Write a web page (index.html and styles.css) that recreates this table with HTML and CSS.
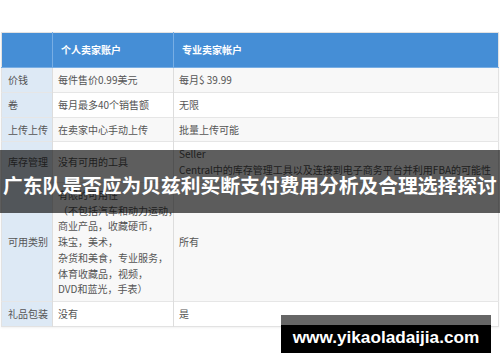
FILE: index.html
```html
<!DOCTYPE html>
<html lang="zh-CN">
<head>
<meta charset="utf-8">
<title>个人卖家账户与专业卖家帐户</title>
<link rel="stylesheet" href="styles.css">
</head>
<body>
<div class="page">
  <table class="compare">
    <colgroup>
      <col class="c1">
      <col class="c2">
      <col class="c3">
    </colgroup>
    <thead>
      <tr>
        <th></th>
        <th>个人卖家账户</th>
        <th>专业卖家帐户</th>
      </tr>
    </thead>
    <tbody>
      <tr class="odd">
        <td class="label">价钱</td>
        <td>每件售价0.99美元</td>
        <td>每月$ 39.99</td>
      </tr>
      <tr>
        <td class="label">卷</td>
        <td>每月最多40个销售额</td>
        <td>无限</td>
      </tr>
      <tr class="odd">
        <td class="label">上传上传</td>
        <td>在卖家中心手动上传</td>
        <td>批量上传可能</td>
      </tr>
      <tr>
        <td class="label">库存管理</td>
        <td>没有可用的工具</td>
        <td class="nowrap">Seller<br>Central中的库存管理工具以及连接到电子商务平台并利用FBA的可能性</td>
      </tr>
      <tr class="odd">
        <td class="label">可用类别</td>
        <td class="nowrap">有限的可用性<br>（不包括汽车和动力运动，<br>商业产品，收藏硬币，<br>珠宝，美术，<br>杂货和美食，专业服务，<br>体育收藏品，视频，<br>DVD和蓝光，手表）</td>
        <td>所有</td>
      </tr>
      <tr>
        <td class="label">礼品包装</td>
        <td>没有</td>
        <td>是</td>
      </tr>
    </tbody>
  </table>

  <div class="banner">
    <h1 class="banner-title">广东队是否应为贝兹利买断支付费用分析及合理选择探讨</h1>
  </div>

  <div class="watermark">www.yikaoladaijia.com</div>
</div>
</body>
</html>
```

FILE: styles.css
```css
html, body {
  margin: 0;
  padding: 0;
  background: #ffffff;
}

.page {
  position: relative;
  width: 500px;
  height: 362px;
  overflow: hidden;
  padding: 32px 2px 0 1px;
  box-sizing: border-box;
  font-family: "Noto Sans CJK SC", "Noto Sans", sans-serif;
}

.compare {
  width: 497px;
  table-layout: fixed;
  border-collapse: collapse;
  border: 1px solid #e2e2e2;
  font-size: 10px;
  line-height: 15.75px;
  color: #555555;
  box-shadow: 0 1px 2px rgba(0, 0, 0, 0.06);
}

.c1 { width: 51px; }
.c2 { width: 121px; }
.c3 { width: 325px; }

.compare th {
  background: #458ed6;
  color: #ffffff;
  font-weight: bold;
  text-align: left;
  padding: 9px 8px 9px 8px;
  height: 16px;
  border-left: 1px solid #78aee4;
  border-bottom: 1px solid #78aee4;
}

.compare th:first-child {
  border-left: none;
}

.compare td {
  padding: 4px 5px;
  vertical-align: middle;
  border-top: 1px solid #e6e6e6;
  border-left: 1px solid #dddddd;
  background: #ffffff;
}

.compare tr.odd td {
  background: #f8f8f8;
}

.compare td.label,
.compare tr.odd td.label {
  background: #dde9f5;
  padding-left: 6px;
  padding-right: 0;
  white-space: nowrap;
  overflow: visible;
  border-left: none;
}

.nowrap {
  white-space: nowrap;
}

.banner {
  position: absolute;
  left: 0;
  top: 150px;
  width: 500px;
  height: 63px;
  background: rgba(0, 0, 0, 0.63);
  display: flex;
  align-items: center;
  justify-content: center;
}

.banner-title {
  margin: 0;
  padding-top: 6px;
  font-family: "Noto Sans CJK SC", sans-serif;
  font-size: 19.75px;
  font-weight: bold;
  line-height: 1;
  color: #ffffff;
  white-space: nowrap;
}

.watermark {
  position: absolute;
  left: 281px;
  top: 315px;
  width: 210px;
  height: 38px;
  box-sizing: border-box;
  padding-top: 12px;
  background: linear-gradient(#666666 0, #666666 10px, #000000 10px, #000000 100%);
  color: #ffffff;
  font-family: "Liberation Sans", Arial, sans-serif;
  font-weight: bold;
  font-size: 17.2px;
  line-height: 20px;
  text-align: center;
}
```
